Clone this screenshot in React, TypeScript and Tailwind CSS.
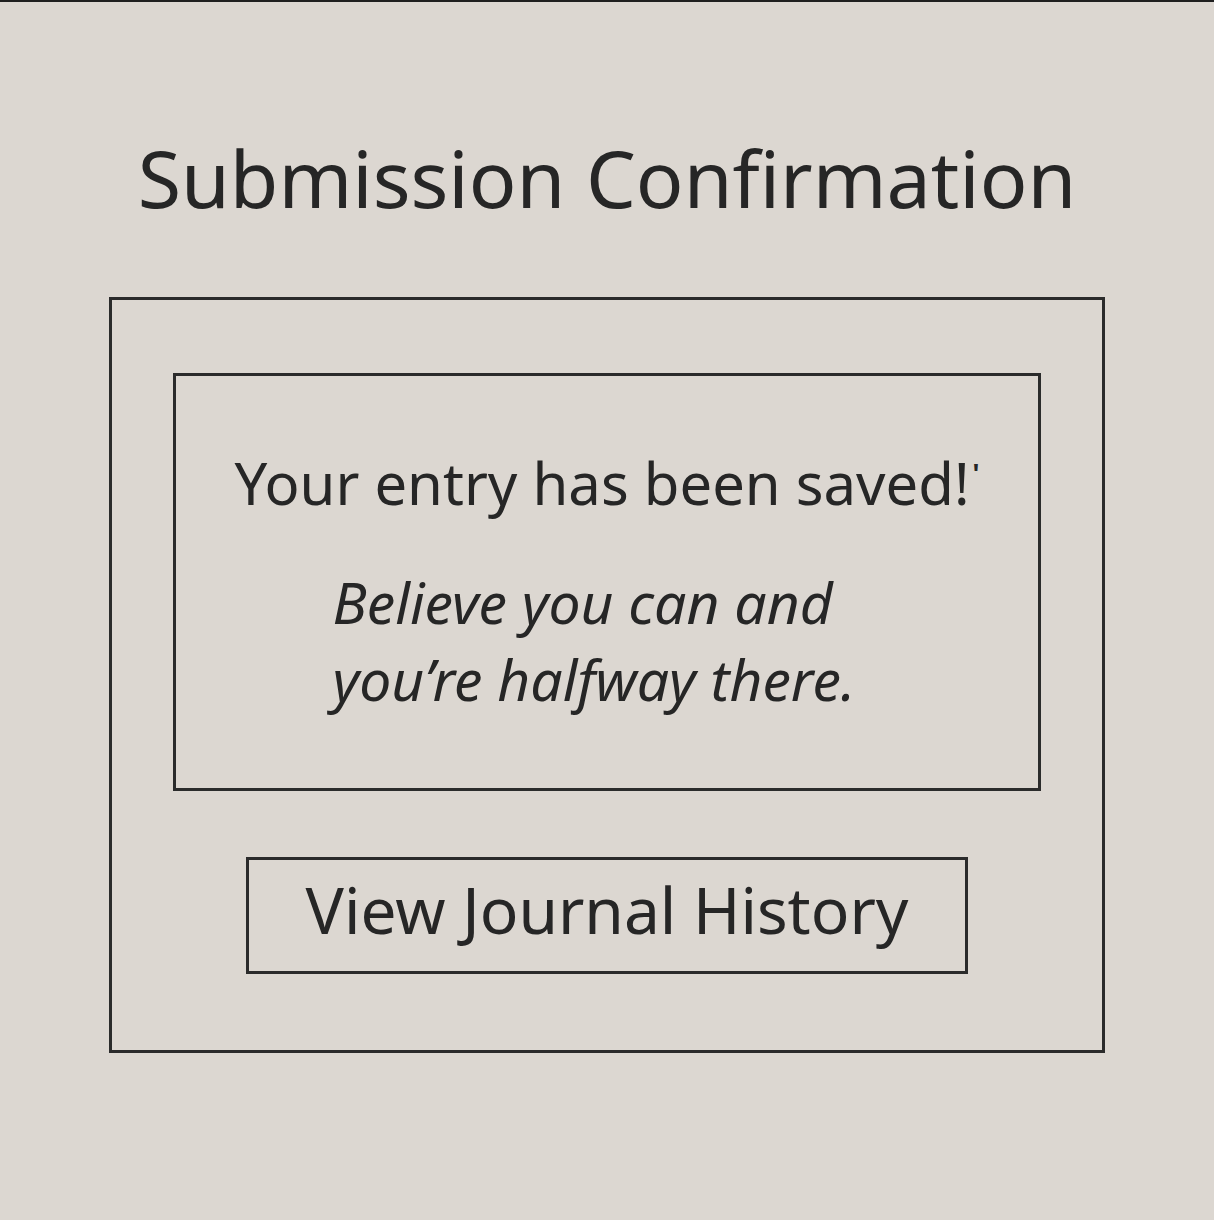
const hand = { fontFamily: '"Noto Sans", "Open Sans", sans-serif' }

export default function App() {
  return (
    <div className="min-h-[1220px] w-full bg-[#dcd7d1] text-[#262626]" style={hand}>
      <div className="h-[2px] w-full bg-[#1f1f1f]" />

      <h1 className="pt-[126px] text-center text-[79px] leading-[100px] font-normal">
        Submission Confirmation
      </h1>

      <section className="mx-auto mt-[69px] flex w-[996px] flex-col items-center border-[3px] border-[#2b2b2b] pb-[76px] pt-[73px]">
        <div className="flex h-[418px] w-[868px] flex-col items-center border-[3px] border-[#2b2b2b] pt-[72px]">
          <p className="text-[58px] leading-[70px]">
            Your entry has been saved!
            <span className="relative -top-[22px] ml-[3px] text-[26px] font-bold">'</span>
          </p>
          <p className="mr-[26px] mt-[34px] text-[57px] italic leading-[77px]">
            Believe you can and
            <br />
            you’re halfway there.
          </p>
        </div>

        <button className="mt-[66px] flex h-[117px] w-[722px] items-center justify-center border-[3px] border-[#2b2b2b] pb-[12px] text-[64px] leading-none">
          View Journal History
        </button>
      </section>
    </div>
  )
}
